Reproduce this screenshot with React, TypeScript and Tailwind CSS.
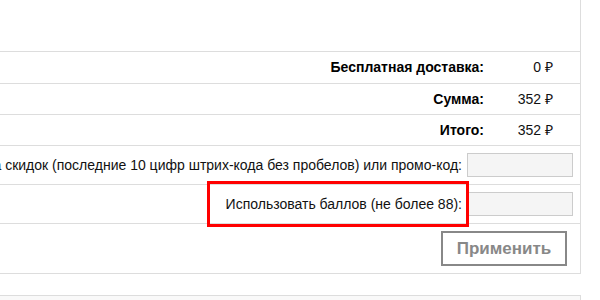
import React from 'react';

// Cart totals block: summary rows, discount/points inputs and the apply button
const totals = [
    { label: 'Бесплатная доставка:', value: '0 ₽', h: 'h-[32px]' },
    { label: 'Сумма:', value: '352 ₽', h: 'h-[31px]' },
    { label: 'Итого:', value: '352 ₽', h: 'h-[31px]' },
];

export default function App() {
    return (
        <div className="w-[600px] h-[300px] overflow-hidden bg-white font-['Liberation_Sans',Arial,sans-serif] text-[14px] text-[#111]">
            <div className="relative w-[581px] border-r border-[#dddddd]">
                <div className="h-[51px]" />

                {totals.map((row) => (
                    <div key={row.label} className={`${row.h} flex items-center justify-end border-t border-[#dddddd]`}>
                        <div className="font-bold text-black">{row.label}</div>
                        <div className="w-[96px] pr-[27px] text-right">{row.value}</div>
                    </div>
                ))}

                {/* Discount card / promo code */}
                <div className="h-[39px] flex items-center justify-end gap-[5px] pr-[7px] border-t border-[#dddddd] overflow-hidden">
                    <div className="whitespace-nowrap">
                        Номер дисконтной карты или карта скидок (последние 10 цифр штрих-кода без пробелов) или промо-код:
                    </div>
                    <input className="shrink-0 w-[106px] h-[24px] bg-[#f5f5f5] border border-[#cccccc] outline-none" />
                </div>

                {/* Bonus points */}
                <div className="h-[39px] flex items-center justify-end gap-[5px] pr-[7px] border-t border-[#dddddd]">
                    <div className="whitespace-nowrap">Использовать баллов (не более 88):</div>
                    <input className="shrink-0 w-[106px] h-[24px] bg-[#f5f5f5] border border-[#cccccc] outline-none" />
                </div>

                <div className="h-[51px] flex items-center justify-end pr-[13px] border-t border-[#dddddd] border-b">
                    <button className="w-[126px] h-[35px] border-2 border-[#888888] bg-white text-[#888888] font-bold text-[17px]">
                        Применить
                    </button>
                </div>

                {/* Highlight annotation */}
                <div className="absolute left-[207px] top-[181px] w-[262px] h-[46px] border-[3px] border-[#ff0000]" />
            </div>

            <div className="mt-[21px] w-[581px] h-[20px] bg-[#f9f9f9] border-t border-r border-[#dddddd]" />
        </div>
    );
}
